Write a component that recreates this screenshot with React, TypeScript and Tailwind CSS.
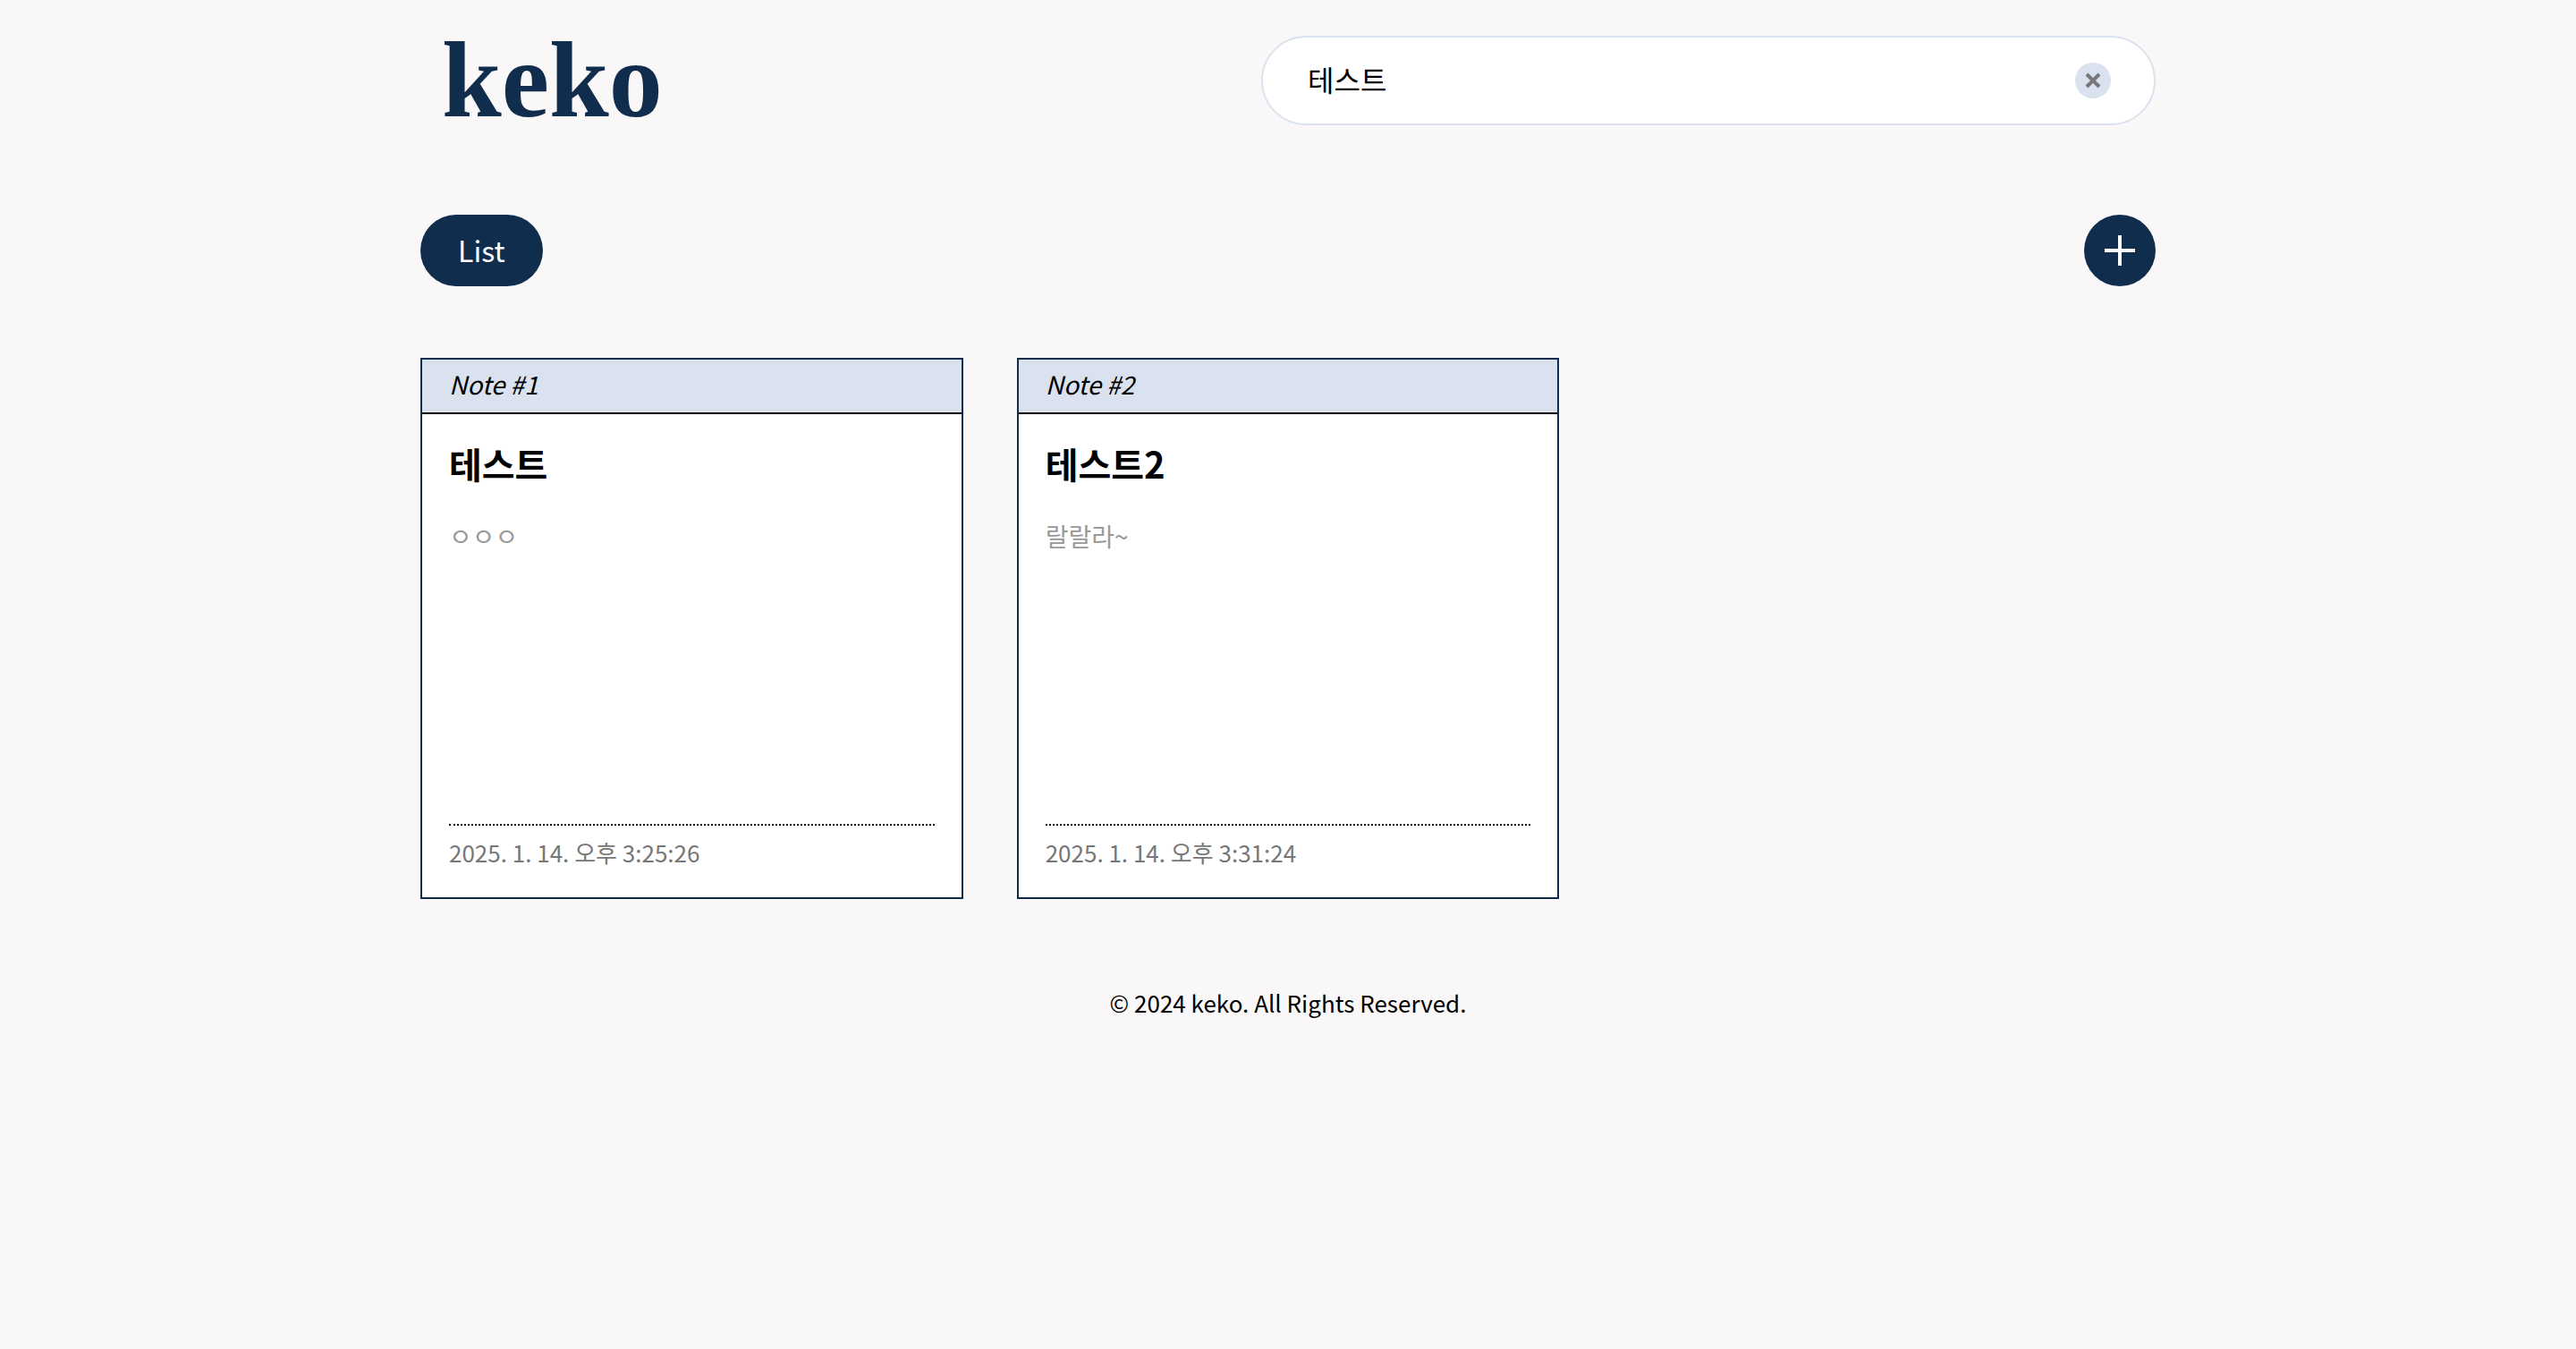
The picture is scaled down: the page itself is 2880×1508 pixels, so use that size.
import { useState } from "react";

type Note = { id: number; title: string; body: string; date: string };

const notes: Note[] = [
  { id: 1, title: "테스트", body: "ㅇㅇㅇ", date: "2025. 1. 14. 오후 3:25:26" },
  { id: 2, title: "테스트2", body: "랄랄라~", date: "2025. 1. 14. 오후 3:31:24" },
];

function NoteCard({ note }: { note: Note }) {
  return (
    <article className="flex flex-col border-2 border-[#112d4e] bg-white">
      <header className="border-b-2 border-black bg-[#dbe2ef] px-[30px] pt-[7px] pb-3 text-[28px] leading-[40px] italic">
        Note #{note.id}
      </header>
      <div className="flex flex-col px-[30px] pt-[26px] pb-[30px]">
        <h2 className="text-[40px] leading-[58px] font-bold">{note.title}</h2>
        <p className="mt-8 h-[342px] text-[28px] leading-[40px] text-[#999999]">{note.body}</p>
        <time className="border-t-2 border-dotted border-black pt-[10px] text-[26px] leading-[40px] text-[#777777]">
          {note.date}
        </time>
      </div>
    </article>
  );
}

export default function App() {
  const [query, setQuery] = useState("테스트");
  return (
    <div className="min-h-screen bg-[#f9f7f7] font-['Noto_Sans_CJK_KR',sans-serif] text-black">
      <div className="mx-auto max-w-[1940px]">
        <header className="flex items-center justify-between pt-10">
          <a
            href="#"
            className="px-6 font-['Liberation_Serif',serif] text-[120px] leading-[100px] font-bold text-[#112d4e]"
          >
            keko
          </a>
          <form
            role="search"
            onSubmit={(e) => e.preventDefault()}
            className="flex h-[100px] w-full max-w-[1000px] items-center rounded-full border-2 border-[#dbe2ef] bg-white px-12"
          >
            <input
              type="text"
              aria-label="Search notes"
              value={query}
              onChange={(e) => setQuery(e.target.value)}
              className="min-w-0 flex-1 bg-transparent pb-1 pl-[2px] text-[32px] leading-[46px] outline-none"
            />
            <button
              type="button"
              aria-label="Clear"
              onClick={() => setQuery("")}
              className="flex size-10 items-center justify-center rounded-full bg-[#dbe2ef]"
            >
              <svg viewBox="0 0 18 18" className="size-[18px]" stroke="#777777" strokeWidth="4" aria-hidden="true">
                <path d="M2 2 16 16M16 2 2 16" />
              </svg>
            </button>
          </form>
        </header>

        <main>
          <div className="mt-[100px] flex items-center justify-between">
            <button type="button" className="h-20 rounded-full bg-[#112d4e] px-[42px] pb-[2px] text-[32px] text-white">
              List
            </button>
            <button
              type="button"
              aria-label="Add note"
              className="flex size-20 items-center justify-center rounded-full bg-[#112d4e]"
            >
              <svg viewBox="0 0 34 34" className="size-[34px]" stroke="#ffffff" strokeWidth="4" aria-hidden="true">
                <path d="M0 17H34M17 0V34" />
              </svg>
            </button>
          </div>
          <section className="mt-20 grid grid-cols-3 gap-[60px]">
            {notes.map((n) => (
              <NoteCard key={n.id} note={n} />
            ))}
          </section>
        </main>

        <footer className="pt-24 pb-10 text-center text-[26px] leading-[40px]">
          © 2024 keko. All Rights Reserved.
        </footer>
      </div>
    </div>
  );
}
